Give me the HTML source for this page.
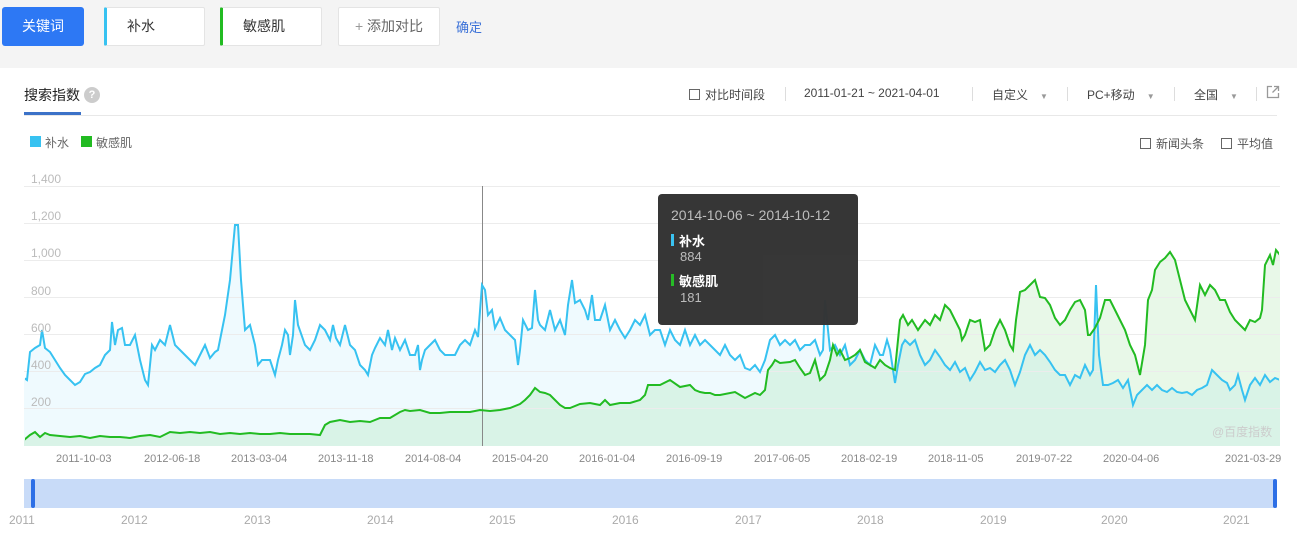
<!DOCTYPE html>
<html><head><meta charset="utf-8"><style>
*{margin:0;padding:0;box-sizing:border-box}
body{width:1297px;height:539px;overflow:hidden;background:#f4f4f4;font-family:"Liberation Sans","Noto Sans CJK SC",sans-serif;position:relative;color:#333}
.a{position:absolute}
.btn{position:absolute;top:7px;height:39px;background:#fff;border:1px solid #e4e4e4;border-radius:2px;font-size:14px;line-height:37px;color:#333}
.panel{position:absolute;left:0;top:68px;width:1297px;height:471px;background:#fff}
.t{font-size:12px;color:#555;position:absolute}
.cb{display:inline-block;width:11px;height:11px;border:1px solid #666;vertical-align:-1px;margin-right:5px}
.sep{position:absolute;width:1px;height:14px;background:#ddd;top:87px}
.tri{font-size:8px;color:#999;margin-left:12px}
.yl{position:absolute;left:31px;font-size:12px;color:#bbb}
.xl{position:absolute;top:453px;font-size:11px;color:#888}
.yr{position:absolute;top:513px;font-size:12px;color:#aaa}
</style></head><body>
<div class="a" style="left:2px;top:7px;width:82px;height:39px;background:#2d78f4;border-radius:3px;color:#fff;font-size:14px;line-height:39px;text-align:center">关键词</div>
<div class="btn" style="left:104px;width:101px;border-left:3px solid #37c2f1;padding-left:20px">补水</div>
<div class="btn" style="left:220px;width:102px;border-left:3px solid #22bb22;padding-left:20px">敏感肌</div>
<div class="btn" style="left:338px;width:102px;text-align:center;color:#666"><span style="color:#999">+</span> 添加对比</div>
<div class="a" style="left:456px;top:17px;font-size:13px;color:#3c72d8">确定</div>
<div class="panel"></div>
<div class="a" style="left:24px;top:85px;font-size:14px;color:#222">搜索指数</div>
<div class="a" style="left:84px;top:87px;width:16px;height:16px;border-radius:8px;background:#ccc;color:#fff;font-size:11px;text-align:center;line-height:16px;font-weight:bold">?</div>
<div class="a" style="left:24px;top:112px;width:57px;height:3px;background:#3c72c8"></div>
<div class="a" style="left:24px;top:115px;width:1253px;height:1px;background:#e8e8e8"></div>
<div class="t" style="left:689px;top:86px;color:#444"><span class="cb"></span>对比时间段</div>
<div class="sep" style="left:785px"></div>
<div class="t" style="left:804px;top:86px;color:#444">2011-01-21 ~ 2021-04-01</div>
<div class="sep" style="left:972px"></div>
<div class="t" style="left:992px;top:86px;color:#444">自定义<span class="tri">▼</span></div>
<div class="sep" style="left:1067px"></div>
<div class="t" style="left:1087px;top:86px;color:#444">PC+移动<span class="tri">▼</span></div>
<div class="sep" style="left:1174px"></div>
<div class="t" style="left:1194px;top:86px;color:#444">全国<span class="tri">▼</span></div>
<div class="sep" style="left:1256px"></div>
<svg class="a" style="left:1266px;top:85px" width="14" height="14"><path d="M6 1.5H1.5V12.5H12.5V8M8 1.5H12.5V6M12.5 1.5L6.5 7.5" fill="none" stroke="#999" stroke-width="1.3"/></svg>
<div class="a" style="left:30px;top:136px;width:11px;height:11px;background:#37c2f1"></div>
<div class="t" style="left:45px;top:134px;color:#666">补水</div>
<div class="a" style="left:81px;top:136px;width:11px;height:11px;background:#22bb22"></div>
<div class="t" style="left:96px;top:134px;color:#666">敏感肌</div>
<div class="t" style="left:1140px;top:135px;color:#555"><span class="cb"></span>新闻头条</div>
<div class="t" style="left:1221px;top:135px;color:#555"><span class="cb"></span>平均值</div>
<svg class="a" style="left:0;top:0" width="1297" height="539">
<defs>
<polygon id="bf" points="24,446 24,378 27,380 30,352 35,348 40,345 42,330 45,348 50,352 55,360 60,368 65,375 70,380 75,385 80,382 85,374 90,372 95,368 100,365 105,355 110,350 112,322 115,345 118,330 122,328 125,345 130,345 135,335 140,360 145,380 148,385 152,345 155,350 160,340 165,345 170,325 175,345 180,350 185,355 190,360 195,365 200,355 205,345 210,358 215,352 218,350 222,330 225,315 230,280 235,225 238,225 241,280 245,330 250,325 255,345 258,365 262,360 265,360 270,360 275,375 278,360 282,345 285,330 288,335 290,355 293,335 295,300 298,325 305,345 310,350 315,340 320,325 325,330 330,340 333,325 336,338 340,345 345,325 350,345 355,350 360,365 365,370 368,375 372,355 375,348 380,338 385,345 388,330 392,350 395,338 400,350 405,340 410,355 415,355 418,345 420,370 422,360 425,350 430,345 435,340 440,350 445,355 450,355 455,355 460,345 465,340 470,345 475,330 478,337 482,285 485,290 488,315 492,310 495,328 500,318 505,330 510,335 515,340 518,365 520,350 523,320 528,330 532,328 535,290 538,320 540,325 545,330 550,310 555,330 560,320 565,335 568,305 572,280 575,303 580,300 585,310 588,320 592,295 595,320 600,320 605,305 610,330 615,320 620,330 625,338 630,330 635,320 640,325 645,315 650,335 655,330 660,330 665,345 670,330 675,340 680,345 685,330 690,345 695,335 700,345 705,340 710,345 715,350 720,355 725,345 730,355 735,360 740,355 745,368 750,370 755,365 760,372 765,360 770,340 775,335 780,345 785,340 790,345 795,340 800,350 805,345 810,345 815,340 820,355 823,350 825,300 827,320 830,350 835,345 840,355 845,345 850,365 855,360 860,350 865,360 870,365 875,345 880,355 883,355 887,340 890,350 895,383 898,365 902,345 905,340 910,345 915,340 920,355 925,365 930,360 935,350 940,357 945,365 950,370 955,362 960,372 965,368 970,380 975,372 980,362 985,370 990,368 995,372 1000,365 1005,360 1010,370 1015,385 1020,372 1025,355 1030,345 1035,355 1040,350 1045,355 1050,362 1055,370 1060,375 1065,375 1070,385 1075,375 1080,378 1085,365 1090,375 1093,370 1096,285 1099,355 1103,385 1108,385 1113,383 1118,380 1123,388 1128,380 1133,405 1137,395 1142,390 1147,385 1152,390 1157,385 1162,390 1167,392 1172,388 1177,392 1182,393 1187,392 1192,395 1197,390 1202,388 1207,385 1212,370 1217,375 1222,380 1227,383 1230,390 1235,385 1238,375 1242,390 1245,400 1250,385 1255,378 1260,385 1265,375 1270,382 1275,378 1280,380 1280,446"/>
<polygon id="gf" points="24,446 24,440 30,435 35,432 40,437 45,433 50,435 60,436 70,437 80,436 90,438 100,436 110,437 120,437 130,438 140,436 150,435 160,437 170,432 180,433 190,432 200,433 210,432 220,434 230,433 240,434 250,433 260,434 270,434 280,433 290,434 300,434 310,434 320,435 325,425 330,422 340,420 350,422 360,421 370,422 380,418 390,418 400,412 405,410 410,411 420,410 430,413 440,413 450,412 460,412 470,412 480,410 490,411 500,410 510,408 520,404 525,400 530,395 535,388 540,392 545,393 550,395 555,400 560,405 565,408 570,408 580,404 590,403 600,405 605,400 610,405 620,403 630,403 640,400 645,395 648,385 655,385 660,385 670,380 680,387 690,385 695,390 700,392 705,393 710,393 715,395 720,395 735,392 745,398 755,393 760,395 765,390 768,370 772,365 775,360 780,363 790,362 795,360 800,368 805,375 810,373 815,360 820,380 825,375 830,360 833,345 837,355 840,350 845,360 850,358 855,355 860,350 865,362 870,365 875,368 880,360 885,365 890,368 895,370 900,320 903,315 908,325 912,320 918,330 925,320 930,325 935,315 940,320 945,305 950,310 960,330 962,340 965,335 970,320 975,322 980,320 985,350 990,345 995,330 1000,320 1005,330 1010,345 1013,350 1016,320 1020,292 1025,290 1030,285 1035,280 1040,297 1045,298 1050,305 1055,318 1060,325 1065,320 1070,310 1075,302 1080,300 1085,310 1088,335 1090,335 1095,328 1100,318 1105,300 1110,300 1115,310 1120,320 1125,330 1130,345 1135,355 1140,375 1145,345 1148,300 1152,290 1155,270 1160,262 1165,258 1170,252 1175,260 1180,280 1185,300 1190,310 1195,320 1200,285 1205,295 1210,285 1215,290 1220,300 1225,300 1230,312 1235,320 1240,325 1245,330 1250,320 1255,322 1260,318 1262,310 1265,265 1270,255 1273,265 1276,250 1280,255 1280,446"/>
<clipPath id="c"><rect x="25" y="180" width="1254" height="264"/></clipPath>
</defs>
<use href="#bf" fill="#37c2f1" fill-opacity="0.08" stroke="none"/>
<use href="#gf" fill="#22bb22" fill-opacity="0.1" stroke="none"/>
<g stroke="#ececec" stroke-width="1"><line x1="24" y1="186.5" x2="1280" y2="186.5"/><line x1="24" y1="223.5" x2="1280" y2="223.5"/><line x1="24" y1="260.5" x2="1280" y2="260.5"/><line x1="24" y1="297.5" x2="1280" y2="297.5"/><line x1="24" y1="334.5" x2="1280" y2="334.5"/><line x1="24" y1="371.5" x2="1280" y2="371.5"/><line x1="24" y1="408.5" x2="1280" y2="408.5"/></g>
<line x1="482.5" y1="186" x2="482.5" y2="446" stroke="#888" stroke-width="1"/>
<use href="#bf" fill="none" stroke="#37c2f1" stroke-width="2" clip-path="url(#c)"/>
<use href="#gf" fill="none" stroke="#22bb22" stroke-width="2" clip-path="url(#c)"/>
<rect x="24" y="479" width="1253" height="29" fill="#c8dbf8"/>
<rect x="31" y="479" width="4" height="29" rx="2" fill="#2d6fe6"/>
<rect x="1273" y="479" width="4" height="29" rx="2" fill="#2d6fe6"/>
</svg>
<div class="yl" style="top:172px">1,400</div><div class="yl" style="top:209px">1,200</div><div class="yl" style="top:246px">1,000</div><div class="yl" style="top:284px">800</div><div class="yl" style="top:321px">600</div><div class="yl" style="top:358px">400</div><div class="yl" style="top:395px">200</div>
<div class="a" style="left:1212px;top:423px;font-size:12px;color:#ccc">@百度指数</div>
<div class="a" style="left:658px;top:194px;width:200px;height:131px;background:#333;border-radius:4px;opacity:.98">
<div class="a" style="left:13px;top:13px;font-size:14px;color:#bbb">2014-10-06 ~ 2014-10-12</div>
<div class="a" style="left:13px;top:40px;width:3px;height:12px;background:#37c2f1"></div>
<div class="a" style="left:21px;top:37px;font-size:13px;color:#fff;font-weight:bold">补水</div>
<div class="a" style="left:22px;top:55px;font-size:13px;color:#bbb">884</div>
<div class="a" style="left:13px;top:80px;width:3px;height:12px;background:#22bb22"></div>
<div class="a" style="left:21px;top:77px;font-size:13px;color:#fff;font-weight:bold">敏感肌</div>
<div class="a" style="left:22px;top:96px;font-size:13px;color:#bbb">181</div>
</div>
<div class="xl" style="left:56px">2011-10-03</div><div class="xl" style="left:144px">2012-06-18</div><div class="xl" style="left:231px">2013-03-04</div><div class="xl" style="left:318px">2013-11-18</div><div class="xl" style="left:405px">2014-08-04</div><div class="xl" style="left:492px">2015-04-20</div><div class="xl" style="left:579px">2016-01-04</div><div class="xl" style="left:666px">2016-09-19</div><div class="xl" style="left:754px">2017-06-05</div><div class="xl" style="left:841px">2018-02-19</div><div class="xl" style="left:928px">2018-11-05</div><div class="xl" style="left:1016px">2019-07-22</div><div class="xl" style="left:1103px">2020-04-06</div><div class="xl" style="left:1225px">2021-03-29</div>
<div class="yr" style="left:9px">2011</div><div class="yr" style="left:121px">2012</div><div class="yr" style="left:244px">2013</div><div class="yr" style="left:367px">2014</div><div class="yr" style="left:489px">2015</div><div class="yr" style="left:612px">2016</div><div class="yr" style="left:735px">2017</div><div class="yr" style="left:857px">2018</div><div class="yr" style="left:980px">2019</div><div class="yr" style="left:1101px">2020</div><div class="yr" style="left:1223px">2021</div>
</body></html>
